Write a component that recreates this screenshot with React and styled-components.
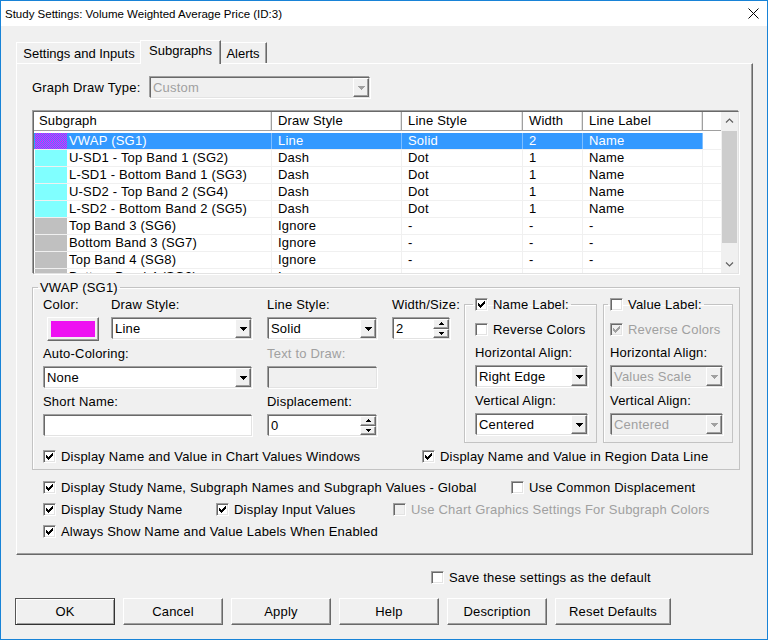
import React from "react";
import styled, { createGlobalStyle, css } from "styled-components";

const GlobalStyle = createGlobalStyle`
  html, body { margin: 0; padding: 0; background: #fff; }
  body {
    font-family: "Liberation Sans", Arial, sans-serif;
    font-size: 13px;
    letter-spacing: 0.2px;
    color: #000;
  }
  * { box-sizing: border-box; }
`;

// classic 3d borders
const sunken = css`
  border: 1px solid;
  border-color: #696969 #e3e3e3 #e3e3e3 #696969;
  box-shadow: -1px -1px 0 #a0a0a0, 1px 1px 0 #fff;
  margin: 1px;
`;

const raised = css`
  border: 1px solid;
  border-color: #fff #696969 #696969 #fff;
  box-shadow: inset -1px -1px 0 #a0a0a0;
`;

const Window = styled.div`
  width: 768px;
  height: 640px;
  border: 1px solid #1883d7;
  background: #f0f0f0;
  display: flex;
  flex-direction: column;
`;

const TitleBar = styled.div`
  height: 25px;
  background: #fff;
  display: flex;
  align-items: center;
  justify-content: space-between;
  padding: 0 8px 0 4px;
  font-size: 11.5px;
  letter-spacing: 0;
  flex-shrink: 0;
`;

const Body = styled.div`
  display: flex;
  flex-direction: column;
  padding: 14px 14px 0 15px;
`;

const TabStrip = styled.div`
  display: flex;
  align-items: flex-end;
  height: 23px;
`;

const Tab = styled.div`
  width: ${(p) => p.$w}px;
  height: ${(p) => (p.$active ? 24 : 21)}px;
  margin: ${(p) => (p.$active ? "0 -2px -1px -2px" : "0")};
  padding-top: ${(p) => (p.$active ? 2 : 3)}px;
  line-height: 15px;
  text-align: center;
  letter-spacing: 0;
  background: #f0f0f0;
  border: 1px solid;
  border-bottom: none;
  border-color: #fff #696969 #696969 #fff;
  box-shadow: inset -1px 0 0 #a0a0a0;
  position: ${(p) => (p.$active ? "relative" : "static")};
  z-index: ${(p) => (p.$active ? 1 : 0)};
`;

const Panel = styled.div`
  width: 737px;
  height: 492px;
  border: 1px solid;
  border-color: #fff #696969 #696969 #fff;
  box-shadow: inset -1px -1px 0 #a0a0a0;
  padding: 12px 0 0 15px;
  display: flex;
  flex-direction: column;
`;

const Row = styled.div`
  display: flex;
  align-items: center;
`;

const Label = styled.div`
  height: 16px;
  line-height: 16px;
  white-space: nowrap;
  color: ${(p) => (p.$disabled ? "#a0a0a0" : "#000")};
  width: ${(p) => (p.$w ? `${p.$w}px` : "auto")};
`;

/* combo box */
const ComboBox = styled.div`
  ${sunken};
  width: ${(p) => p.$w - 2}px;
  height: 21px;
  background: ${(p) => (p.$disabled ? "#f0f0f0" : "#fff")};
  display: flex;
  align-items: stretch;
`;

const ComboText = styled.div`
  flex: 1;
  padding-left: 2px;
  line-height: 19px;
  white-space: nowrap;
  overflow: hidden;
  color: ${(p) => (p.$disabled ? "#a0a0a0" : "#000")};
`;

const DropButton = styled.div`
  width: 16px;
  background: #f0f0f0;
  ${raised};
  display: flex;
  align-items: center;
  justify-content: center;
`;

const Tri = ({ color = "#000", w = 7, h = 4, up }) => (
  <svg width={w} height={h} viewBox={`0 0 ${w} ${h}`} shapeRendering="crispEdges">
    <polygon points={up ? `${w / 2},0 ${w},${h} 0,${h}` : `0,0 ${w},0 ${w / 2},${h}`} fill={color} />
  </svg>
);

const Combo = ({ value, w, disabled }) => (
  <ComboBox $w={w} $disabled={disabled}>
    <ComboText $disabled={disabled}>{value}</ComboText>
    <DropButton>
      <Tri color={disabled ? "#a0a0a0" : "#000"} />
    </DropButton>
  </ComboBox>
);

const Edit = styled.div`
  ${sunken};
  width: ${(p) => p.$w - 2}px;
  height: 21px;
  background: ${(p) => (p.$disabled ? "#f0f0f0" : "#fff")};
  padding-left: 2px;
  line-height: 19px;
  display: flex;
`;

const SpinText = styled.div`
  flex: 1;
`;

const SpinButtons = styled.div`
  width: 16px;
  display: flex;
  flex-direction: column;
`;

const SpinBtn = styled.div`
  flex: 1;
  background: #f0f0f0;
  ${raised};
  display: flex;
  align-items: center;
  justify-content: center;
`;

const Spin = ({ value, w }) => (
  <Edit $w={w}>
    <SpinText>{value}</SpinText>
    <SpinButtons>
      <SpinBtn><Tri w={5} h={3} up /></SpinBtn>
      <SpinBtn><Tri w={5} h={3} /></SpinBtn>
    </SpinButtons>
  </Edit>
);

/* checkbox */
const CheckRow = styled.div`
  display: flex;
  align-items: center;
  height: 16px;
  white-space: nowrap;
  width: ${(p) => (p.$w ? `${p.$w}px` : "auto")};
  flex-shrink: 0;
  color: ${(p) => (p.$disabled ? "#a0a0a0" : "#000")};
`;

const Box = styled.div`
  width: 13px;
  height: 13px;
  margin-right: ${(p) => p.$gap}px;
  background: ${(p) => (p.$disabled ? "#f0f0f0" : "#fff")};
  border: 1px solid;
  border-color: #a0a0a0 #fff #fff #a0a0a0;
  box-shadow: inset 1px 1px 0 #696969, inset -1px -1px 0 #e3e3e3;
  display: flex;
  align-items: center;
  justify-content: center;
  flex-shrink: 0;
`;

const Check = ({ checked, disabled, children, w, gap = 5 }) => (
  <CheckRow $w={w} $disabled={disabled}>
    <Box $disabled={disabled} $gap={gap}>
      {checked && (
        <svg width="7" height="7" viewBox="0 0 7 7" shapeRendering="crispEdges">
          <path d="M0 2h1v1h1v1h1v-1h1v-1h1v-1h1v-1h1v3h-1v1h-1v1h-1v1h-1v1h-1v-1h-1v-1h-1z" fill={disabled ? "#a0a0a0" : "#000"} />
        </svg>
      )}
    </Box>
    <span>{children}</span>
  </CheckRow>
);

/* table */
const Table = styled.div`
  ${sunken};
  margin: 12px 0 0 1px;
  width: 706px;
  height: 163px;
  background: #fff;
  display: flex;
  overflow: hidden;
`;

const List = styled.div`
  flex: 1;
  display: flex;
  flex-direction: column;
  overflow: hidden;
`;

const Header = styled.div`
  display: flex;
  height: 19px;
  border-bottom: 1px solid #a0a0a0;
  margin-bottom: 2px;
  flex-shrink: 0;
`;

const HeadCell = styled.div`
  width: ${(p) => p.$w}px;
  flex-shrink: 0;
  line-height: 18px;
  padding-left: ${(p) => p.$pad}px;
  border-right: 1px solid #a0a0a0;
  box-shadow: inset -1px 0 0 #e3e3e3;
  &:last-child { flex: 1; border-right: none; box-shadow: none; }
`;

const ListRow = styled.div`
  display: flex;
  height: 17px;
  border-bottom: 1px solid #f0f0f0;
  flex-shrink: 0;
`;

const Cell = styled.div`
  width: ${(p) => p.$w}px;
  flex-shrink: 0;
  display: flex;
  align-items: center;
  line-height: 16px;
  padding-left: ${(p) => p.$pad}px;
  border-right: 1px solid ${(p) => (p.$sel ? "#7fbfff" : "#f0f0f0")};
  background: ${(p) => (p.$sel ? "#3399ff" : "transparent")};
  color: ${(p) => (p.$sel ? "#fff" : "#000")};
  white-space: nowrap;
  overflow: hidden;
`;

const Filler = styled.div`
  flex: 1;
`;

const Swatch = styled.div`
  width: 32px;
  height: 16px;
  margin-right: 2px;
  flex-shrink: 0;
  background: ${(p) => p.$c};
  ${(p) =>
    p.$sel &&
    css`
      background: repeating-conic-gradient(#ff00ff 0% 25%, #3399ff 0% 50%) 0 0 / 2px 2px;
    `}
`;

const ScrollBar = styled.div`
  width: 17px;
  background: #f0f0f0;
  display: flex;
  flex-direction: column;
  align-items: center;
`;

const ScrollArrow = styled.div`
  height: 17px;
  width: 17px;
  display: flex;
  align-items: center;
  justify-content: center;
`;

const Thumb = styled.div`
  width: 15px;
  height: 112px;
  margin-top: 2px;
  background: #cdcdcd;
`;

const ScrollTrack = styled.div`
  flex: 1;
`;

const Chevron = ({ down }) => (
  <svg width="9" height="5" viewBox="0 0 9 5">
    <polyline points={down ? "1,0.5 4.5,4 8,0.5" : "1,4.5 4.5,1 8,4.5"} fill="none" stroke="#606060" strokeWidth="1.2" />
  </svg>
);

/* group boxes */
const Group = styled.fieldset`
  margin: ${(p) => p.$m || "0"};
  padding: ${(p) => p.$pad};
  width: ${(p) => p.$w}px;
  min-width: 0;
  border: 1px solid #c3c3c3;
  box-shadow: inset 1px 1px 0 #fff;
  flex-shrink: 0;
`;

const Legend = styled.legend`
  padding: 0 2px;
  margin-left: ${(p) => p.$ml || 0}px;
  line-height: 15px;
  height: 15px;
  display: flex;
  align-items: center;
`;

const TopArea = styled.div`
  display: flex;
  align-items: flex-start;
`;

const FieldGrid = styled.div`
  display: grid;
  grid-template-columns: 54px 142px 111px 59px;
  column-gap: 14px;
  row-gap: 5px;
`;

const Field = styled.div`
  display: flex;
  flex-direction: column;
  gap: 4px;
  grid-column: ${(p) => p.$span || "auto"};
  margin-top: ${(p) => p.$mt || 0}px;
`;

const ColorButton = styled.div`
  width: 52px;
  height: 24px;
  margin-left: 4px;
  background: #f0f0f0;
  ${raised};
  padding: 3px;
`;

const ColorFill = styled.div`
  width: 100%;
  height: 100%;
  background: #ee11f2;
`;

const LabelStack = styled.div`
  display: flex;
  flex-direction: column;
`;

const CheckLine = styled.div`
  display: flex;
  margin-top: ${(p) => p.$mt}px;
  padding-left: ${(p) => p.$pl || 0}px;
`;

const ButtonRow = styled.div`
  display: flex;
  gap: 8px;
  margin: 13px 0 0 -1px;
`;

const Button = styled.div`
  width: ${(p) => p.$w}px;
  height: 27px;
  line-height: 25px;
  text-align: center;
  background: #f0f0f0;
  ${raised};
  ${(p) =>
    p.$default &&
    css`
      border-color: #555 #333 #333 #555;
      box-shadow: inset 1px 1px 0 #fff, inset -1px -1px 0 #a0a0a0;
    `}
`;

const CloseIcon = () => (
  <svg width="11" height="11" viewBox="0 0 11 11">
    <path d="M0.5 0.5 L10.5 10.5 M10.5 0.5 L0.5 10.5" stroke="#000" strokeWidth="1" />
  </svg>
);

const cols = [238, 130, 121, 60, 120];

const subgraphs = [
  { name: "VWAP (SG1)", c: "#ff00ff", d: "Line", l: "Solid", w: "2", lab: "Name", sel: true },
  { name: "U-SD1 - Top Band 1 (SG2)", c: "#80ffff", d: "Dash", l: "Dot", w: "1", lab: "Name" },
  { name: "L-SD1 - Bottom Band 1 (SG3)", c: "#80ffff", d: "Dash", l: "Dot", w: "1", lab: "Name" },
  { name: "U-SD2 - Top Band 2 (SG4)", c: "#80ffff", d: "Dash", l: "Dot", w: "1", lab: "Name" },
  { name: "L-SD2 - Bottom Band 2 (SG5)", c: "#80ffff", d: "Dash", l: "Dot", w: "1", lab: "Name" },
  { name: "Top Band 3 (SG6)", c: "#c0c0c0", d: "Ignore", l: "-", w: "-", lab: "-" },
  { name: "Bottom Band 3 (SG7)", c: "#c0c0c0", d: "Ignore", l: "-", w: "-", lab: "-" },
  { name: "Top Band 4 (SG8)", c: "#c0c0c0", d: "Ignore", l: "-", w: "-", lab: "-" },
  { name: "Bottom Band 4 (SG9)", c: "#c0c0c0", d: "Ignore", l: "-", w: "-", lab: "-" },
];

const LabelGroup = ({ title, checked, hAlign, vAlign, disabled, pad }) => (
  <Group $w={disabled ? 130 : 133} $pad={pad} $m={disabled ? "0 0 0 6px" : "0 0 0 13px"}>
    <Legend $ml={-2}>
      <Check checked={checked} gap={5}>{title}</Check>
    </Legend>
    <LabelStack>
      <Check checked={disabled} disabled={disabled}>Reverse Colors</Check>
      <Field $mt={8}>
        <Label>Horizontal Align:</Label>
        <Combo value={hAlign} w={114} disabled={disabled} />
      </Field>
      <Field $mt={5}>
        <Label>Vertical Align:</Label>
        <Combo value={vAlign} w={114} disabled={disabled} />
      </Field>
    </LabelStack>
  </Group>
);

export default function App() {
  return (
    <>
      <GlobalStyle />
      <Window>
        <TitleBar>
          <span>Study Settings: Volume Weighted Average Price (ID:3)</span>
          <CloseIcon />
        </TitleBar>
        <Body>
          <TabStrip>
            <Tab $w={126}>Settings and Inputs</Tab>
            <Tab $w={81} $active>Subgraphs</Tab>
            <Tab $w={48}>Alerts</Tab>
          </TabStrip>
          <Panel>
            <Row>
              <Label $w={117}>Graph Draw Type:</Label>
              <Combo value="Custom" w={222} disabled />
            </Row>

            <Table>
              <List>
                <Header>
                  <HeadCell $w={cols[0]} $pad={5}>Subgraph</HeadCell>
                  <HeadCell $w={cols[1]} $pad={6}>Draw Style</HeadCell>
                  <HeadCell $w={cols[2]} $pad={6}>Line Style</HeadCell>
                  <HeadCell $w={cols[3]} $pad={6}>Width</HeadCell>
                  <HeadCell $w={cols[4]} $pad={6}>Line Label</HeadCell>
                  <HeadCell />
                </Header>
                {subgraphs.map((s) => (
                  <ListRow key={s.name}>
                    <Cell $w={cols[0]} $pad={1} $sel={s.sel}>
                      <Swatch $c={s.c} $sel={s.sel} />
                      {s.name}
                    </Cell>
                    <Cell $w={cols[1]} $pad={6} $sel={s.sel}>{s.d}</Cell>
                    <Cell $w={cols[2]} $pad={6} $sel={s.sel}>{s.l}</Cell>
                    <Cell $w={cols[3]} $pad={6} $sel={s.sel}>{s.w}</Cell>
                    <Cell $w={cols[4]} $pad={6} $sel={s.sel}>{s.lab}</Cell>
                    <Filler />
                  </ListRow>
                ))}
              </List>
              <ScrollBar>
                <ScrollArrow><Chevron /></ScrollArrow>
                <Thumb />
                <ScrollTrack />
                <ScrollArrow><Chevron down /></ScrollArrow>
              </ScrollBar>
            </Table>

            <Group $w={708} $pad="2px 7px 5px 10px" $m="6px 0 0 0">
              <Legend $ml={-5}>VWAP (SG1)</Legend>
              <TopArea>
                <FieldGrid>
                  <Field>
                    <Label>Color:</Label>
                    <ColorButton><ColorFill /></ColorButton>
                  </Field>
                  <Field>
                    <Label>Draw Style:</Label>
                    <Combo value="Line" w={142} />
                  </Field>
                  <Field>
                    <Label>Line Style:</Label>
                    <Combo value="Solid" w={111} />
                  </Field>
                  <Field>
                    <Label>Width/Size:</Label>
                    <Spin value="2" w={59} />
                  </Field>

                  <Field $span="1 / 3">
                    <Label>Auto-Coloring:</Label>
                    <Combo value="None" w={210} />
                  </Field>
                  <Field>
                    <Label $disabled>Text to Draw:</Label>
                    <Edit $w={111} $disabled />
                  </Field>
                  <div />

                  <Field $span="1 / 3">
                    <Label>Short Name:</Label>
                    <Edit $w={210} />
                  </Field>
                  <Field>
                    <Label>Displacement:</Label>
                    <Spin value="0" w={111} />
                  </Field>
                </FieldGrid>

                <LabelGroup title="Name Label:" checked hAlign="Right Edge" vAlign="Centered" pad="9px 7px 6px 10px" />
                <LabelGroup title="Value Label:" disabled hAlign="Values Scale" vAlign="Centered" pad="9px 8px 6px 6px" />
              </TopArea>
              <CheckLine $mt={5}>
                <Check checked w={379}>Display Name and Value in Chart Values Windows</Check>
                <Check checked>Display Name and Value in Region Data Line</Check>
              </CheckLine>
            </Group>

            <CheckLine $mt={9} $pl={11}>
              <Check checked w={468}>Display Study Name, Subgraph Names and Subgraph Values - Global</Check>
              <Check>Use Common Displacement</Check>
            </CheckLine>
            <CheckLine $mt={6} $pl={11}>
              <Check checked w={173}>Display Study Name</Check>
              <Check checked w={177}>Display Input Values</Check>
              <Check disabled>Use Chart Graphics Settings For Subgraph Colors</Check>
            </CheckLine>
            <CheckLine $mt={6} $pl={11}>
              <Check checked>Always Show Name and Value Labels When Enabled</Check>
            </CheckLine>
          </Panel>

          <CheckLine $mt={14} $pl={415}>
            <Check>Save these settings as the default</Check>
          </CheckLine>

          <ButtonRow>
            <Button $w={100} $default>OK</Button>
            <Button $w={100}>Cancel</Button>
            <Button $w={100}>Apply</Button>
            <Button $w={100}>Help</Button>
            <Button $w={100}>Description</Button>
            <Button $w={116}>Reset Defaults</Button>
          </ButtonRow>
        </Body>
      </Window>
    </>
  );
}
